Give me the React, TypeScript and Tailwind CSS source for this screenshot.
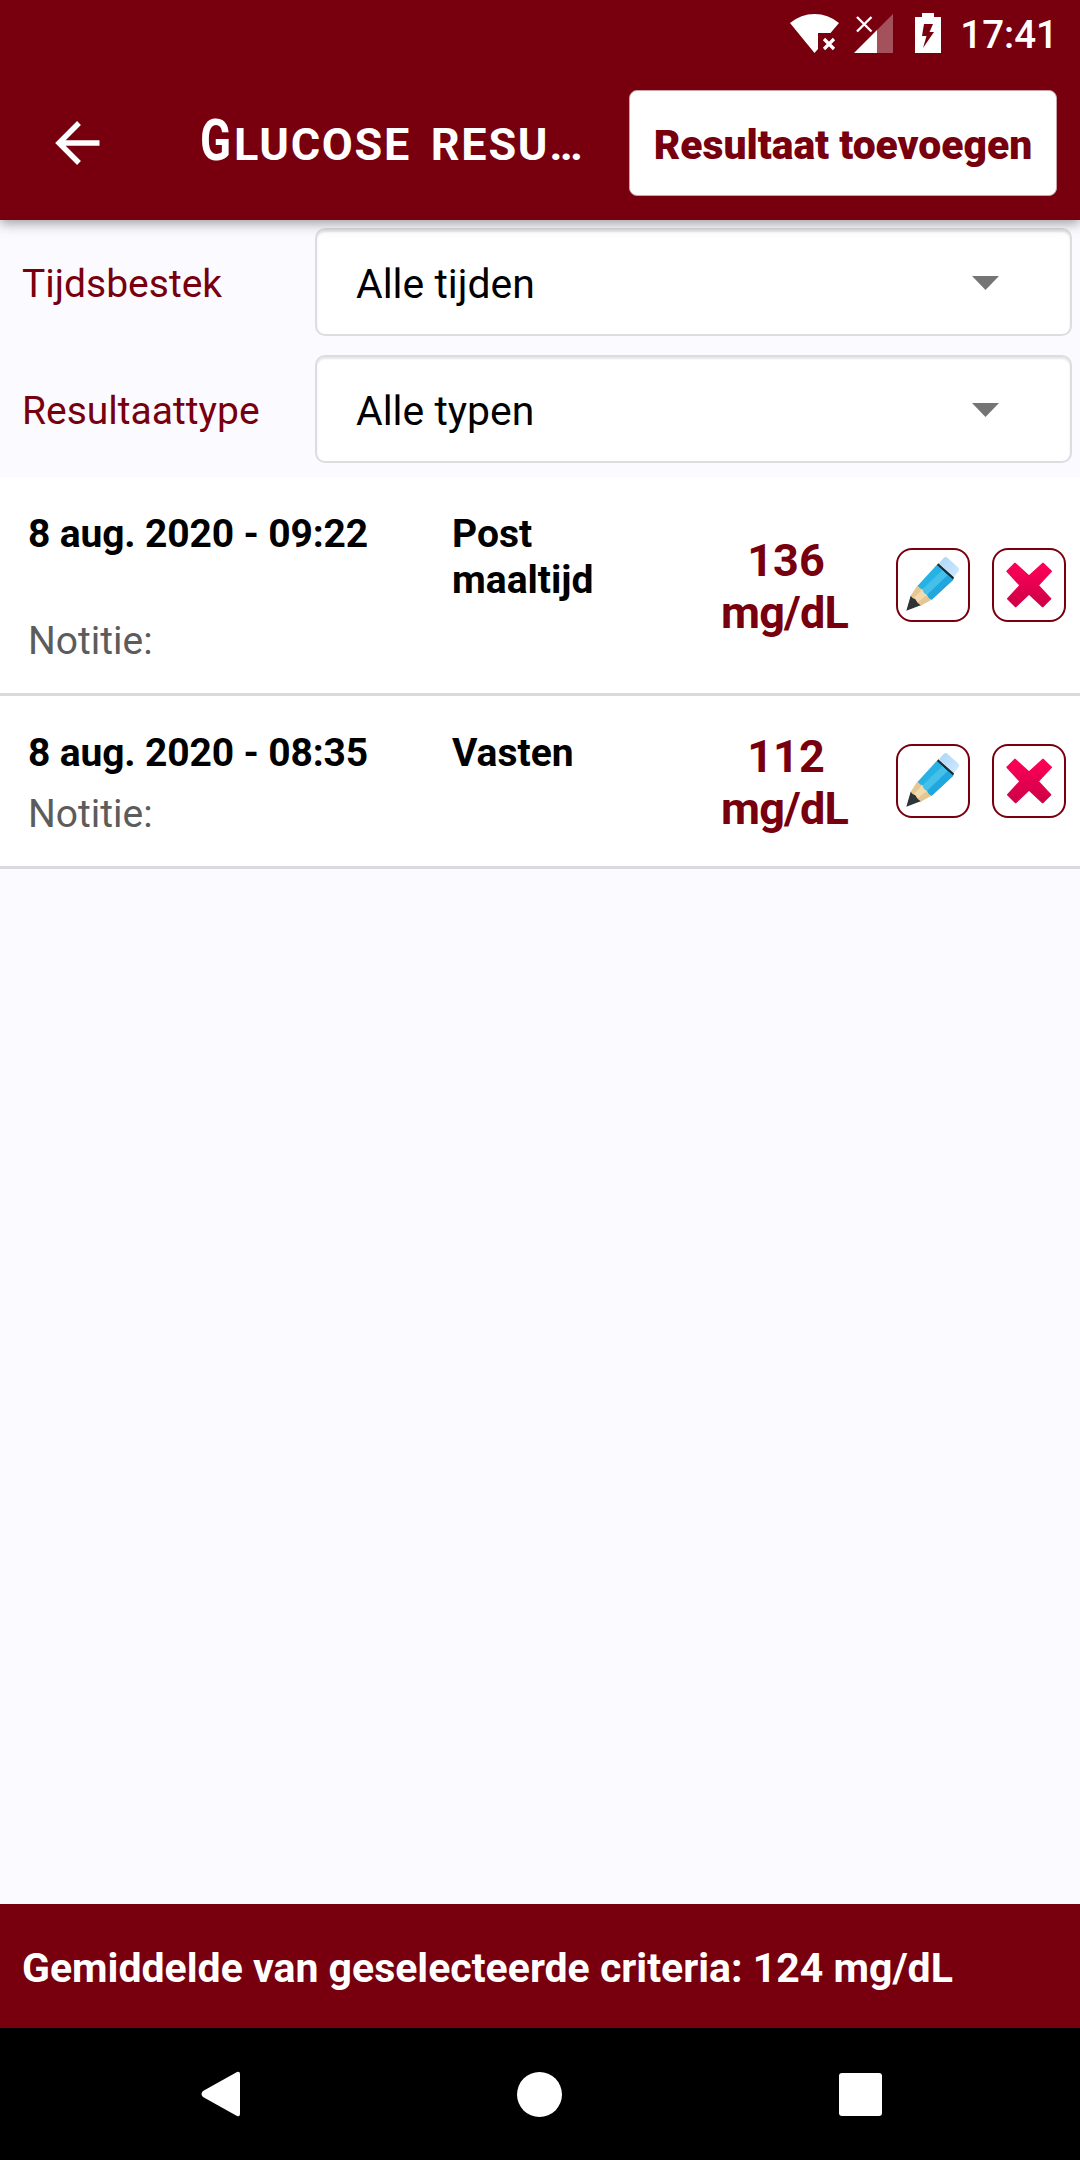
type Result = {
  date: string;
  type: string;
  value: string;
};

const results: Result[] = [
  { date: '8 aug. 2020 - 09:22', type: 'Post maaltijd', value: '136' },
  { date: '8 aug. 2020 - 08:35', type: 'Vasten', value: '112' },
];

const filters = [
  { label: 'Tijdsbestek', value: 'Alle tijden' },
  { label: 'Resultaattype', value: 'Alle typen' },
];

function StatusBar() {
  return (
    <div className="flex h-[66px] items-center justify-end pr-[22px]">
      <svg width="49" height="40" viewBox="0 0 49 40" className="mr-[15px]" aria-hidden="true">
        <path d="M0 10Q11 1 24.500 1T49 10L40.500 20H28V36L24.500 40Z" fill="#fff" />
        <path d="M34 26L44 36M44 26L34 36" stroke="#fff" strokeWidth="3.200" />
      </svg>
      <svg width="39" height="40" viewBox="0 0 39 40" className="mr-[22px]" aria-hidden="true">
        <path d="M39 1V40H23V17Z" fill="#fff" fillOpacity="0.320" />
        <path d="M23 17V40H0Z" fill="#fff" />
        <path d="M3 4L17.500 18.500M17.500 4L3 18.500" stroke="#fff" strokeWidth="2.400" />
      </svg>
      <svg width="26" height="40" viewBox="0 0 26 40" className="mr-[19px]" aria-hidden="true">
        <path d="M7 0H19V4H26V40H0V4H7Z" fill="#fff" />
        <path d="M9 11H18L14.500 19H19L8 35L11.500 23H7Z" fill="#78000e" />
      </svg>
      <span className="pt-[3px] text-[38.5px] leading-[46px] font-medium">17:41</span>
    </div>
  );
}

function Header() {
  return (
    <header className="relative z-10 h-[220px] bg-[#78000e] text-white shadow-[0_3px_12px_rgba(0,0,0,0.4)]">
      <StatusBar />
      <div className="flex h-[154px] items-center pr-[23px] pl-[55px]">
        <svg width="45" height="44" viewBox="0 0 45 44" fill="none" aria-hidden="true">
          <path d="M44.500 22H4M24 2L4 22L24 42" stroke="#fff" strokeWidth="5.400" />
        </svg>
        <h1 className="ml-[100px] flex w-[429px] items-baseline pt-[1px] whitespace-nowrap">
          <span className="inline-block w-[34px] origin-left scale-x-[0.8] text-[57px] leading-[66px] font-bold">G</span>
          <span className="text-[45px] font-bold tracking-[1.7px] [word-spacing:7px]">LUCOSE RESU…</span>
        </h1>
        <button className="h-[106px] w-[428px] rounded-[8px] border border-[#c9a3a8] bg-white pt-[3px] text-[40.8px] leading-[48px] font-black whitespace-nowrap text-[#78000e]">
          Resultaat toevoegen
        </button>
      </div>
    </header>
  );
}

function Filter({ label, value }: { label: string; value: string }) {
  return (
    <div className="flex h-[108px] items-center pr-[8px] pl-[22px]">
      <span className="w-[293px] pt-[3px] text-[39px] leading-[46px] text-[#78000e]">{label}</span>
      <div className="flex h-full flex-1 items-center justify-between rounded-[10px] border-2 border-[#dddce0] bg-white pr-[71px] pl-[39px] shadow-[inset_0_2px_2px_rgba(0,0,0,0.1)]">
        <span className="pt-[3px] text-[40.9px] leading-[50px] text-black">{value}</span>
        <svg width="27" height="14" viewBox="0 0 27 14" className="mt-[2px]" aria-hidden="true">
          <path d="M0 0H27L13.500 14Z" fill="#757575" />
        </svg>
      </div>
    </div>
  );
}

function PencilIcon() {
  return (
    <svg width="70" height="70" viewBox="6 6 210 210" aria-hidden="true">
      <defs>
        <linearGradient id="eraser" x1="0" y1="0" x2="1" y2="1">
          <stop offset="0" stopColor="#abd6f8" />
          <stop offset="1" stopColor="#d2e8ff" />
        </linearGradient>
      </defs>
      <path d="M143 30Q148 25 154 29L186 58Q192 63 188 69L174 86L129 46Z" fill="url(#eraser)" />
      <path d="M127 46L174 88L171 96L122 52Z" fill="#13303d" />
      <path d="M122 51L171 96L107 155Q98 154 93 141Q82 138 79 124Q69 123 65 113Z" fill="#27b2e4" />
      <path d="M139 67L155 82L93 141Q82 138 79 124Z" fill="#45c0ea" />
      <path d="M155 82L171 96L107 155Q98 154 93 141Z" fill="#22a6de" />
      <path d="M65 111Q70 123 79 124Q82 138 93 141Q98 154 107 155L73 174L44 143Z" fill="#e6c793" />
      <path d="M79 124Q82 138 93 141L61 166L51 153Z" fill="#f3daae" />
      <path d="M44 143Q50 152 58 154Q63 165 74 172L31 188Z" fill="#2e3338" />
    </svg>
  );
}

function CrossIcon() {
  return (
    <svg width="70" height="70" viewBox="6 6 210 210" aria-hidden="true">
      <defs>
        <linearGradient id="cross" x1="0" y1="0" x2="0" y2="1">
          <stop offset="0" stopColor="#ff0059" />
          <stop offset="1" stopColor="#cd0046" />
        </linearGradient>
      </defs>
      <path
        d="M69 46L111 84L153 46L178 70L139 112L176 152L152 176L111 138L71 176L47 152L84 112L45 70Z"
        fill="url(#cross)"
        stroke="url(#cross)"
        strokeWidth="4"
        strokeLinejoin="round"
      />
    </svg>
  );
}

function ResultRow({ date, type, value }: Result) {
  return (
    <li className="flex items-center border-b-[3px] border-[#dadade] bg-white pr-[14px] pl-[28px]">
      <div className="w-[670px] self-start pt-[34px] pb-[29px] text-[39px] leading-[46px]">
        <div className="flex font-bold text-black">
          <span className="w-[424px] tracking-[-0.15px]">{date}</span>
          <span className="w-[170px]">{type}</span>
        </div>
        <p className="mt-[15px] text-[#5c5c5c]">Notitie:</p>
      </div>
      <div className="w-[176px] pt-[3px] text-center text-[45px] leading-[52px] font-bold text-[#78000e]">
        {value}
        <br />
        <span className="mr-[3px] tracking-[-0.8px]">mg/dL</span>
      </div>
      <div className="ml-auto flex gap-[22px]">
        <button className="h-[74px] w-[74px] rounded-[16px] border-2 border-[#78000e] bg-white">
          <PencilIcon />
        </button>
        <button className="h-[74px] w-[74px] rounded-[16px] border-2 border-[#78000e] bg-white">
          <CrossIcon />
        </button>
      </div>
    </li>
  );
}

export default function App() {
  return (
    <div className="flex h-[2160px] w-[1080px] flex-col overflow-hidden bg-[#fbfaff] font-['Roboto',sans-serif]">
      <Header />

      <section className="flex h-[257px] flex-col gap-[19px] pt-[8px]">
        {filters.map((filter) => (
          <Filter key={filter.label} {...filter} />
        ))}
      </section>

      <ul className="flex-1">
        {results.map((result) => (
          <ResultRow key={result.date} {...result} />
        ))}
      </ul>

      <footer className="flex h-[124px] items-center bg-[#78000e] pt-[4px] pl-[22px] text-[41px] leading-[46px] font-bold text-white">
        Gemiddelde van geselecteerde criteria: 124 mg/dL
      </footer>

      {/* Android navigation */}
      <nav className="flex h-[132px] items-center bg-black pl-[201px]">
        <svg width="39" height="46" viewBox="0 0 39 46" aria-hidden="true">
          <path d="M36 1Q39 0 39 3V43Q39 46 36 45L2 26Q-1 23 2 20Z" fill="#fff" />
        </svg>
        <span className="ml-[277px] h-[45px] w-[45px] rounded-full bg-white" />
        <span className="ml-[277px] h-[43px] w-[43px] rounded-[3px] bg-white" />
      </nav>
    </div>
  );
}
